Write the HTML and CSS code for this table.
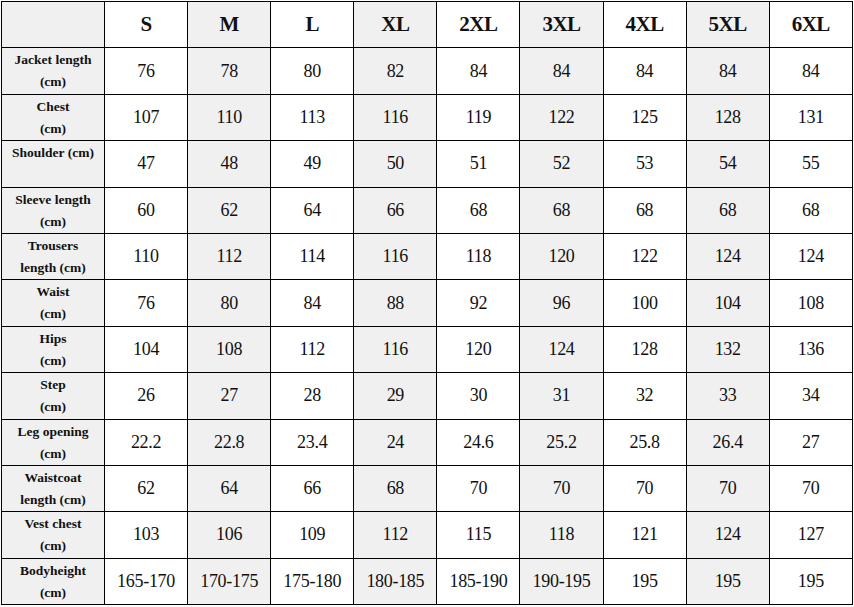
FILE: index.html
```html
<!DOCTYPE html>
<html>
<head>
<meta charset="utf-8">
<link rel="stylesheet" href="styles.css">
</head>
<body>
<table class="size-table">
  <colgroup>
    <col class="c-label"><col class="c-size"><col class="c-size"><col class="c-size"><col class="c-size"><col class="c-size"><col class="c-size"><col class="c-size"><col class="c-size"><col class="c-size">
  </colgroup>
  <thead>
    <tr>
      <th class="grey"></th><th>S</th><th class="grey">M</th><th>L</th><th class="grey">XL</th><th>2XL</th><th class="grey">3XL</th><th>4XL</th><th class="grey">5XL</th><th>6XL</th>
    </tr>
  </thead>
  <tbody>
    <tr><td class="label grey">Jacket length<br>(cm)</td><td>76</td><td class="grey">78</td><td>80</td><td class="grey">82</td><td>84</td><td class="grey">84</td><td>84</td><td class="grey">84</td><td>84</td></tr>
    <tr><td class="label grey">Chest<br>(cm)</td><td>107</td><td class="grey">110</td><td>113</td><td class="grey">116</td><td>119</td><td class="grey">122</td><td>125</td><td class="grey">128</td><td>131</td></tr>
    <tr><td class="label grey">Shoulder (cm)</td><td>47</td><td class="grey">48</td><td>49</td><td class="grey">50</td><td>51</td><td class="grey">52</td><td>53</td><td class="grey">54</td><td>55</td></tr>
    <tr><td class="label grey">Sleeve length<br>(cm)</td><td>60</td><td class="grey">62</td><td>64</td><td class="grey">66</td><td>68</td><td class="grey">68</td><td>68</td><td class="grey">68</td><td>68</td></tr>
    <tr><td class="label grey">Trousers<br>length&nbsp;(cm)</td><td>110</td><td class="grey">112</td><td>114</td><td class="grey">116</td><td>118</td><td class="grey">120</td><td>122</td><td class="grey">124</td><td>124</td></tr>
    <tr><td class="label grey">Waist<br>(cm)</td><td>76</td><td class="grey">80</td><td>84</td><td class="grey">88</td><td>92</td><td class="grey">96</td><td>100</td><td class="grey">104</td><td>108</td></tr>
    <tr><td class="label grey">Hips<br>(cm)</td><td>104</td><td class="grey">108</td><td>112</td><td class="grey">116</td><td>120</td><td class="grey">124</td><td>128</td><td class="grey">132</td><td>136</td></tr>
    <tr><td class="label grey">Step<br>(cm)</td><td>26</td><td class="grey">27</td><td>28</td><td class="grey">29</td><td>30</td><td class="grey">31</td><td>32</td><td class="grey">33</td><td>34</td></tr>
    <tr><td class="label grey">Leg opening<br>(cm)</td><td>22.2</td><td class="grey">22.8</td><td>23.4</td><td class="grey">24</td><td>24.6</td><td class="grey">25.2</td><td>25.8</td><td class="grey">26.4</td><td>27</td></tr>
    <tr><td class="label grey">Waistcoat<br>length&nbsp;(cm)</td><td>62</td><td class="grey">64</td><td>66</td><td class="grey">68</td><td>70</td><td class="grey">70</td><td>70</td><td class="grey">70</td><td>70</td></tr>
    <tr><td class="label grey">Vest chest<br>(cm)</td><td>103</td><td class="grey">106</td><td>109</td><td class="grey">112</td><td>115</td><td class="grey">118</td><td>121</td><td class="grey">124</td><td>127</td></tr>
    <tr><td class="label grey">Bodyheight<br>(cm)</td><td>165-170</td><td class="grey">170-175</td><td>175-180</td><td class="grey">180-185</td><td>185-190</td><td class="grey">190-195</td><td>195</td><td class="grey">195</td><td>195</td></tr>
  </tbody>
</table>
</body>
</html>
```
FILE: styles.css
```css
html, body {
  margin: 0;
  padding: 0;
  background: #fff;
}
body {
  padding: 1px 0 0 1px;
  font-family: "Liberation Serif", "Times New Roman", serif;
  color: #111;
}
.size-table {
  border-collapse: collapse;
  table-layout: fixed;
  width: 851px;
}
.c-label { width: 103px; }
.c-size { width: 83.1px; }
.size-table tr {
  height: 46.4px;
}
.size-table th,
.size-table td {
  border: 1px solid #000;
  padding: 0;
  text-align: center;
  vertical-align: middle;
  background: #fff;
}
.size-table th {
  font-size: 21px;
  font-weight: bold;
  letter-spacing: -0.5px;
}
.size-table td {
  font-size: 18px;
  letter-spacing: -0.3px;
}
.size-table .grey {
  background: #f0f0f0;
}
.size-table td.label {
  font-size: 13.5px;
  font-weight: bold;
  line-height: 22px;
  vertical-align: top;
  padding-top: 1px;
  letter-spacing: 0;
}
```
